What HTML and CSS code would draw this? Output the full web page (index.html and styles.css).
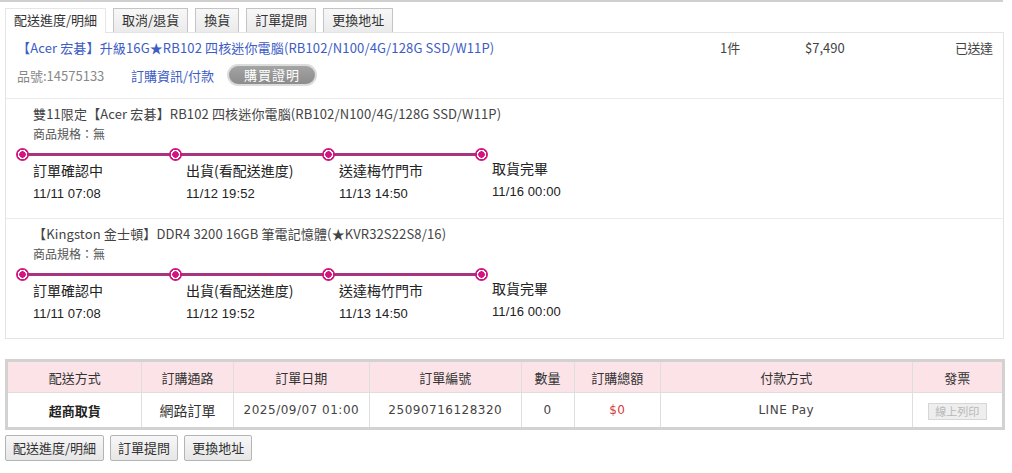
FILE: index.html
```html
<!DOCTYPE html>
<html lang="zh-Hant">
<head>
<meta charset="utf-8">
<title>訂單明細</title>
<link rel="stylesheet" href="styles.css">
</head>
<body>
<div class="page">
  <div class="topline"></div>
  <div class="tabs">
    <div class="tab active">配送進度/明細</div>
    <div class="tab">取消/退貨</div>
    <div class="tab">換貨</div>
    <div class="tab">訂單提問</div>
    <div class="tab">更換地址</div>
  </div>
  <div class="panel">
    <div class="product">
      <div class="prow">
        <a class="ptitle">【Acer 宏碁】升級16G★RB102 四核迷你電腦(RB102/N100/4G/128G SSD/W11P)</a>
        <span class="pqty">1件</span>
        <span class="pprice">$7,490</span>
        <span class="pstatus">已送達</span>
      </div>
      <div class="prow2">
        <span class="pno">品號:14575133</span>
        <a class="plink">訂購資訊/付款</a>
        <span class="pill">購買證明</span>
      </div>
    </div>

    <div class="item">
      <div class="ititle">雙11限定【Acer 宏碁】RB102 四核迷你電腦(RB102/N100/4G/128G SSD/W11P)</div>
      <div class="ispec">商品規格：無</div>
      <div class="timeline">
        <div class="step"><span class="dot"></span><div class="slabel">訂單確認中</div><div class="sdate">11/11 07:08</div></div>
        <div class="step"><span class="dot"></span><div class="slabel">出貨(看配送進度)</div><div class="sdate">11/12 19:52</div></div>
        <div class="step"><span class="dot"></span><div class="slabel">送達梅竹門市</div><div class="sdate">11/13 14:50</div></div>
        <div class="step last"><span class="dot"></span><div class="slabel">取貨完畢</div><div class="sdate">11/16 00:00</div></div>
      </div>
    </div>

    <div class="item final">
      <div class="ititle">【Kingston 金士頓】DDR4 3200 16GB 筆電記憶體(★KVR32S22S8/16)</div>
      <div class="ispec">商品規格：無</div>
      <div class="timeline">
        <div class="step"><span class="dot"></span><div class="slabel">訂單確認中</div><div class="sdate">11/11 07:08</div></div>
        <div class="step"><span class="dot"></span><div class="slabel">出貨(看配送進度)</div><div class="sdate">11/12 19:52</div></div>
        <div class="step"><span class="dot"></span><div class="slabel">送達梅竹門市</div><div class="sdate">11/13 14:50</div></div>
        <div class="step last"><span class="dot"></span><div class="slabel">取貨完畢</div><div class="sdate">11/16 00:00</div></div>
      </div>
    </div>
  </div>

  <table class="otable">
    <colgroup>
      <col class="c1"><col class="c2"><col class="c3"><col class="c4"><col class="c5"><col class="c6"><col class="c7"><col class="c8">
    </colgroup>
    <thead>
      <tr><th>配送方式</th><th>訂購通路</th><th>訂單日期</th><th>訂單編號</th><th>數量</th><th>訂購總額</th><th>付款方式</th><th>發票</th></tr>
    </thead>
    <tbody>
      <tr>
        <td class="bold">超商取貨</td>
        <td class="cjk">網路訂單</td>
        <td class="num">2025/09/07 01:00</td>
        <td class="num">25090716128320</td>
        <td class="num">0</td>
        <td class="num red">$0</td>
        <td class="num">LINE Pay</td>
        <td><span class="disbtn">線上列印</span></td>
      </tr>
    </tbody>
  </table>

  <div class="btns">
    <span class="btn">配送進度/明細</span>
    <span class="btn">訂單提問</span>
    <span class="btn">更換地址</span>
  </div>
</div>
</body>
</html>
```

FILE: styles.css
```css
* { box-sizing: border-box; }
html, body { margin: 0; padding: 0; background: #fff; }
body {
  font-family: "Noto Sans CJK TC", "Liberation Sans", sans-serif;
  font-size: 13px;
  color: #333;
}
.page { width: 1012px; height: 473px; overflow: hidden; }
.topline { height: 2px; width: 1003px; background: #cfcfcf; }

.tabs {
  display: flex;
  gap: 7px;
  margin: 6px 0 0 5px;
  position: relative;
  z-index: 1;
}
.tab {
  height: 24px;
  line-height: 22px;
  padding: 0 8px;
  border: 1px solid #c4c4c4;
  border-bottom: none;
  background: linear-gradient(#f7f7f7, #ebebeb);
  color: #333;
  font-size: 13px;
  white-space: nowrap;
}
.tab.active {
  background: #fff;
  border-color: #e6e6e6;
  height: 25px;
  margin-bottom: -1px;
}

.panel {
  margin-left: 5px;
  width: 999px;
  border: 1px solid #e4e4e4;
}

.product {
  padding: 5px 0 12px 11px;
  border-bottom: 1px solid #ececec;
}
.prow {
  display: grid;
  grid-template-columns: 703px 85px 150px 45px;
  line-height: 20px;
  white-space: nowrap;
}
.ptitle { color: #3d5cc4; font-size: 13px; letter-spacing: 0.14px; }
.pqty, .pprice, .pstatus { color: #444; }
.pstatus { letter-spacing: -0.5px; }
.prow2 {
  display: flex;
  align-items: center;
  margin-top: 6px;
  height: 22px;
}
.pno { color: #888; width: 114px; font-size: 13px; }
.plink { color: #3d5cc4; width: 96px; }
.pill {
  display: inline-block;
  width: 90px;
  height: 22px;
  line-height: 18px;
  border-radius: 11px;
  border: 2px solid #dcdcdc;
  background: linear-gradient(#a4a4a4, #8c8c8c);
  color: #fff;
  text-align: center;
  font-size: 13px;
  letter-spacing: 1px;
}

.item {
  padding: 5px 0 14px 0;
  border-bottom: 1px solid #ececec;
}
.item.final { border-bottom: none; }
.ititle { margin-left: 27px; line-height: 20px; color: #444; letter-spacing: 0.14px; }
.ispec { margin-left: 27px; line-height: 20px; color: #555; font-size: 12px; }

.timeline {
  display: flex;
  margin: 4px 0 0 10px;
}
.step {
  width: 153px;
  position: relative;
}
.step::before {
  content: "";
  position: absolute;
  left: 6px;
  top: 5px;
  width: 153px;
  height: 3px;
  background: #a8347f;
}
.step.last::before { display: none; }
.dot {
  display: block;
  position: relative;
  width: 13px;
  height: 13px;
  border-radius: 50%;
  background: radial-gradient(circle, #d4147f 0 3px, #fff 3.5px 4.5px, #d4147f 5px);
}
.slabel {
  margin-left: 17px;
  line-height: 18px;
  font-size: 14px;
  color: #222;
}
.sdate {
  margin-left: 17px;
  margin-top: 5px;
  line-height: 20px;
  font-family: "Liberation Sans", sans-serif;
  font-size: 13px;
  letter-spacing: 0.1px;
  color: #222;
}
.step.last .slabel, .step.last .sdate { position: relative; top: -2px; }

.otable {
  margin: 20px 0 0 5px;
  width: 1000px;
  border-collapse: collapse;
  border: 3px solid #d2d2d2;
  table-layout: fixed;
}
.c1 { width: 135px; } .c2 { width: 91px; } .c3 { width: 136px; } .c4 { width: 151px; }
.c5 { width: 53px; } .c6 { width: 86px; } .c7 { width: 251px; } .c8 { width: 91px; }
.otable th, .otable td {
  border: 1px solid #dedede;
  text-align: center;
  padding: 0;
}
.otable th {
  background: #fbe3e8;
  height: 32px;
  font-weight: normal;
  font-size: 13px;
  color: #333;
}
.otable td { height: 36px; font-size: 13px; color: #333; }
.otable td.bold { font-weight: bold; color: #222; }
.otable td.cjk { font-size: 14px; }
.otable td.num { font-family: "DejaVu Sans", sans-serif; font-size: 12px; letter-spacing: 0.5px; color: #444; }
.otable td.red { color: #d33a3a; }
.disbtn {
  display: inline-block;
  width: 59px;
  height: 17px;
  line-height: 15px;
  border: 1px solid #d6d6d6;
  background: #eeeeee;
  color: #b8b8b8;
  font-size: 11px;
}

.btns {
  display: flex;
  gap: 6px;
  margin: 5px 0 0 5px;
}
.btn {
  height: 26px;
  line-height: 24px;
  padding: 0 7px;
  border: 1px solid #b4b4b4;
  border-radius: 2px;
  background: linear-gradient(#f7f7f7, #e6e6e6);
  color: #333;
  font-size: 13px;
}
```
